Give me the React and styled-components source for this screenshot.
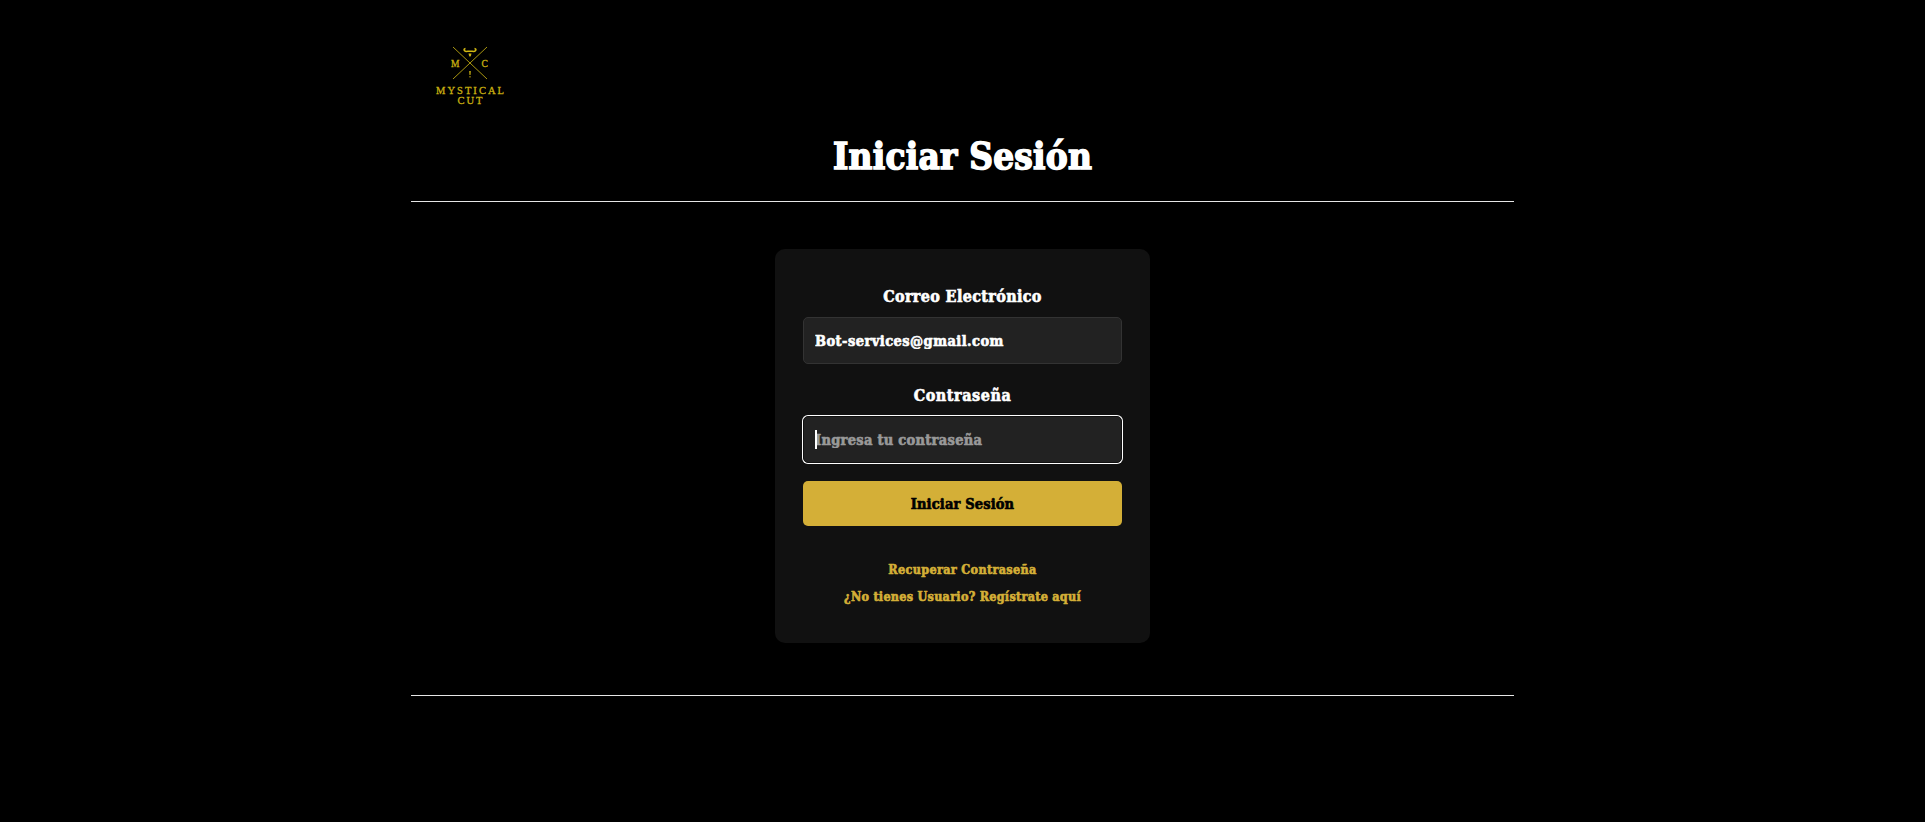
import React from 'react';
import styled, { createGlobalStyle } from 'styled-components';

const GlobalStyle = createGlobalStyle`
  * { box-sizing: border-box; }
  body {
    margin: 0;
    background: #000;
    color: #fff;
    font-family: 'DejaVu Serif Condensed', 'DejaVu Serif', serif;
    font-stretch: condensed;
    font-weight: 700;
  }
`;

const Page = styled.div`
  width: 1103px;
  min-height: 822px;
  margin-left: 411px;
`;

const Header = styled.header`
  height: 202px;
  border-bottom: 1px solid #e6e6e6;
`;

const Logo = styled.svg`
  display: block;
  width: 118px;
  height: 120px;
`;

const Title = styled.h1`
  margin: 0;
  padding-top: 14px;
  text-align: center;
  font-size: 36.5px;
  line-height: 46px;
  letter-spacing: 0.26px;
  -webkit-text-stroke: 1.5px currentColor;
`;

const Main = styled.main`
  height: 494px;
  padding-top: 47px;
  border-bottom: 1px solid #e6e6e6;
`;

const Card = styled.form`
  display: flex;
  flex-direction: column;
  width: 375px;
  height: 394px;
  margin: 0 auto;
  padding: 34px 28px 0;
  border-radius: 10px;
  background: #111;
`;

const Label = styled.label`
  height: 34px;
  line-height: 28px;
  text-align: center;
  font-size: 16px;
  letter-spacing: ${(p) => p.$spacing || '0'};
  -webkit-text-stroke: 0.6px currentColor;
`;

const Field = styled.div`
  position: relative;
  height: 47px;
  margin-bottom: ${(p) => p.$gap};
`;

const Input = styled.input`
  display: block;
  width: 100%;
  height: 100%;
  padding: 0 11px;
  border: 1px solid ${(p) => (p.$active ? '#111' : '#333')};
  border-radius: 5px;
  outline: none;
  box-shadow: ${(p) => (p.$active ? '0 0 0 1px #fff' : 'none')};
  background: #222;
  color: #fff;
  font: inherit;
  font-size: 14.5px;
  letter-spacing: ${(p) => p.$spacing || '0'};
  -webkit-text-stroke: 0.6px currentColor;
  &::placeholder { color: #999; opacity: 1; }
`;

const Caret = styled.span`
  position: absolute;
  left: 12px;
  top: 14px;
  width: 2px;
  height: 19px;
  background: #fff;
`;

const Submit = styled.button`
  height: 45px;
  padding: 0;
  border: 0;
  border-radius: 5px;
  background: #d4af37;
  color: #000;
  font: inherit;
  font-size: 14.5px;
  letter-spacing: 0.14px;
  -webkit-text-stroke: 0.6px currentColor;
`;

const Links = styled.nav`
  display: flex;
  flex-direction: column;
  align-items: center;
  padding-top: 30px;
`;

const TextLink = styled.a`
  height: 27px;
  line-height: 27px;
  color: #d4af37;
  font-size: 12.5px;
  letter-spacing: ${(p) => p.$spacing || '0'};
  -webkit-text-stroke: 0.6px currentColor;
`;

function MysticalCutLogo() {
  return (
    <Logo viewBox="0 0 118 120" fill="#c9b010" fontFamily="'Liberation Serif', serif" fontWeight="400">
      <path d="M42 47 76 79M76 47 42 79" stroke="#a89510" strokeWidth="1" fill="none" />
      <path d="M54.500 48.500q-2 .5-1.200 2 1.200 1.300 3.400.8h4.600q2.200.5 3.400-.8.800-1.500-1.200-2" fill="none" stroke="#d2b812" strokeWidth="1.500" />
      <path d="M57.500 53.500h3l-.5 2-1 1.500-1-1.500Z" />
      <path d="M58.200 71h1.600l-.3 4h-1ZM58.500 76h1v1.500h-1Z" />
      <g stroke="#c9b010" strokeWidth=".3">
        <text x="40" y="66.500" fontSize="9.500">M</text>
        <text x="70.500" y="66.500" fontSize="9.500">C</text>
        <text x="25" y="93.500" fontSize="10.500" textLength="68">MYSTICAL</text>
        <text x="46.500" y="103.500" fontSize="10.500" textLength="25">CUT</text>
      </g>
    </Logo>
  );
}

export default function App() {
  return (
    <>
      <GlobalStyle />
      <Page>
        <Header>
          <MysticalCutLogo />
          <Title>Iniciar Sesión</Title>
        </Header>
        <Main>
          <Card>
            <Label $spacing="0.34px">Correo Electrónico</Label>
            <Field $gap="18px">
              <Input defaultValue="Bot-services@gmail.com" $spacing="0.44px" />
            </Field>
            <Label $spacing="0.54px">Contraseña</Label>
            <Field $gap="18px">
              <Input type="password" placeholder="Ingresa tu contraseña" $spacing="0.28px" $active />
              <Caret />
            </Field>
            <Submit type="button">Iniciar Sesión</Submit>
            <Links>
              <TextLink $spacing="0.34px">Recuperar Contraseña</TextLink>
              <TextLink $spacing="0.27px">¿No tienes Usuario? Regístrate aquí</TextLink>
            </Links>
          </Card>
        </Main>
      </Page>
    </>
  );
}
